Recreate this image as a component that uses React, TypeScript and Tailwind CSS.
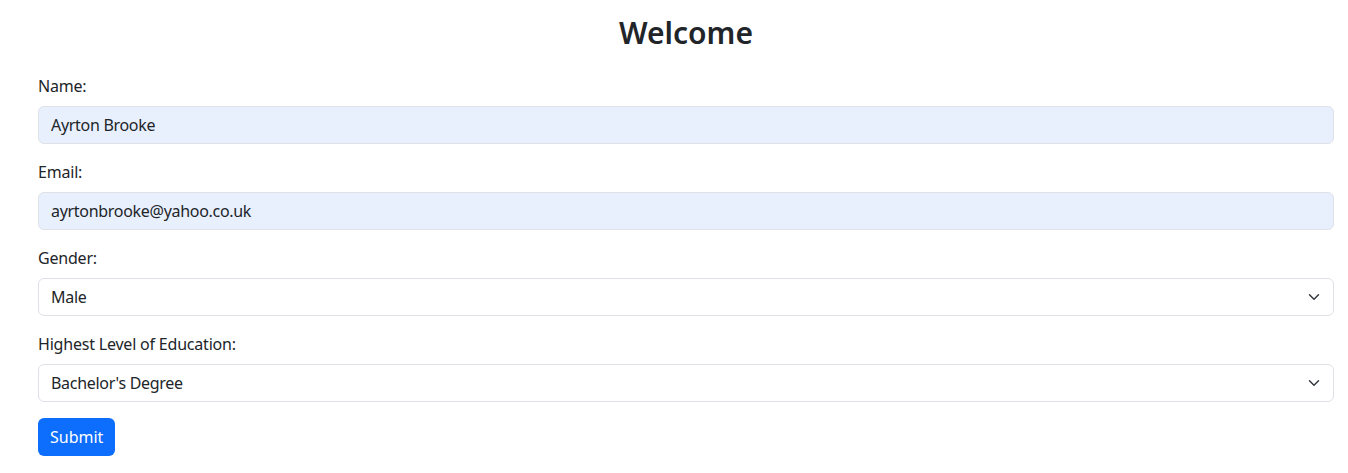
import { useState } from 'react'

const Chevron = () => (
    <svg className="pointer-events-none absolute right-[12px] top-1/2 -translate-y-1/2" width="16" height="12" viewBox="0 0 16 16" fill="none">
        <path d="m2 5 6 6 6-6" stroke="#343a40" strokeWidth="2" strokeLinecap="round" strokeLinejoin="round" />
    </svg>
)

export default function App() {
    const [name, setName] = useState('Ayrton Brooke')
    const [email, setEmail] = useState('ayrtonbrooke@yahoo.co.uk')
    const [gender, setGender] = useState('Male')
    const [edu, setEdu] = useState("Bachelor's Degree")

    const label = 'block mb-2 text-[16px] leading-6 text-[#212529] tracking-[-0.2px]'
    const field = 'block w-full h-[38px] px-[12px] text-[16px] tracking-[-0.3px] text-[#212529] border border-[#dee2e6] rounded-[6px] outline-none'

    return (
        <div className="min-h-screen bg-white font-['Noto_Sans','Open_Sans',sans-serif]">
            <div className="pl-[38px] pr-[14px]">
                <h1 className="pt-[14px] mb-[22px] text-center text-[30px] leading-[38px] font-semibold text-[#212529]">Welcome</h1>
                <form onSubmit={(e) => e.preventDefault()}>
                    <div className="mb-4">
                        <label className={label}>Name:</label>
                        <input className={`${field} bg-[#e8f0fe]`} value={name} onChange={(e) => setName(e.target.value)} />
                    </div>
                    <div className="mb-4">
                        <label className={label}>Email:</label>
                        <input className={`${field} bg-[#e8f0fe]`} value={email} onChange={(e) => setEmail(e.target.value)} />
                    </div>
                    <div className="mb-4">
                        <label className={label}>Gender:</label>
                        <div className="relative">
                            <select className={`${field} appearance-none bg-white`} value={gender} onChange={(e) => setGender(e.target.value)}>
                                <option>Male</option>
                                <option>Female</option>
                                <option>Other</option>
                            </select>
                            <Chevron />
                        </div>
                    </div>
                    <div className="mb-4">
                        <label className={label}>Highest Level of Education:</label>
                        <div className="relative">
                            <select className={`${field} appearance-none bg-white`} value={edu} onChange={(e) => setEdu(e.target.value)}>
                                <option>High School</option>
                                <option>Bachelor's Degree</option>
                                <option>Master's Degree</option>
                                <option>PhD</option>
                            </select>
                            <Chevron />
                        </div>
                    </div>
                    <button type="submit" className="h-[38px] px-[12px] rounded-[6px] bg-[#0d6efd] text-white text-[16px] leading-6">
                        Submit
                    </button>
                </form>
            </div>
        </div>
    )
}
